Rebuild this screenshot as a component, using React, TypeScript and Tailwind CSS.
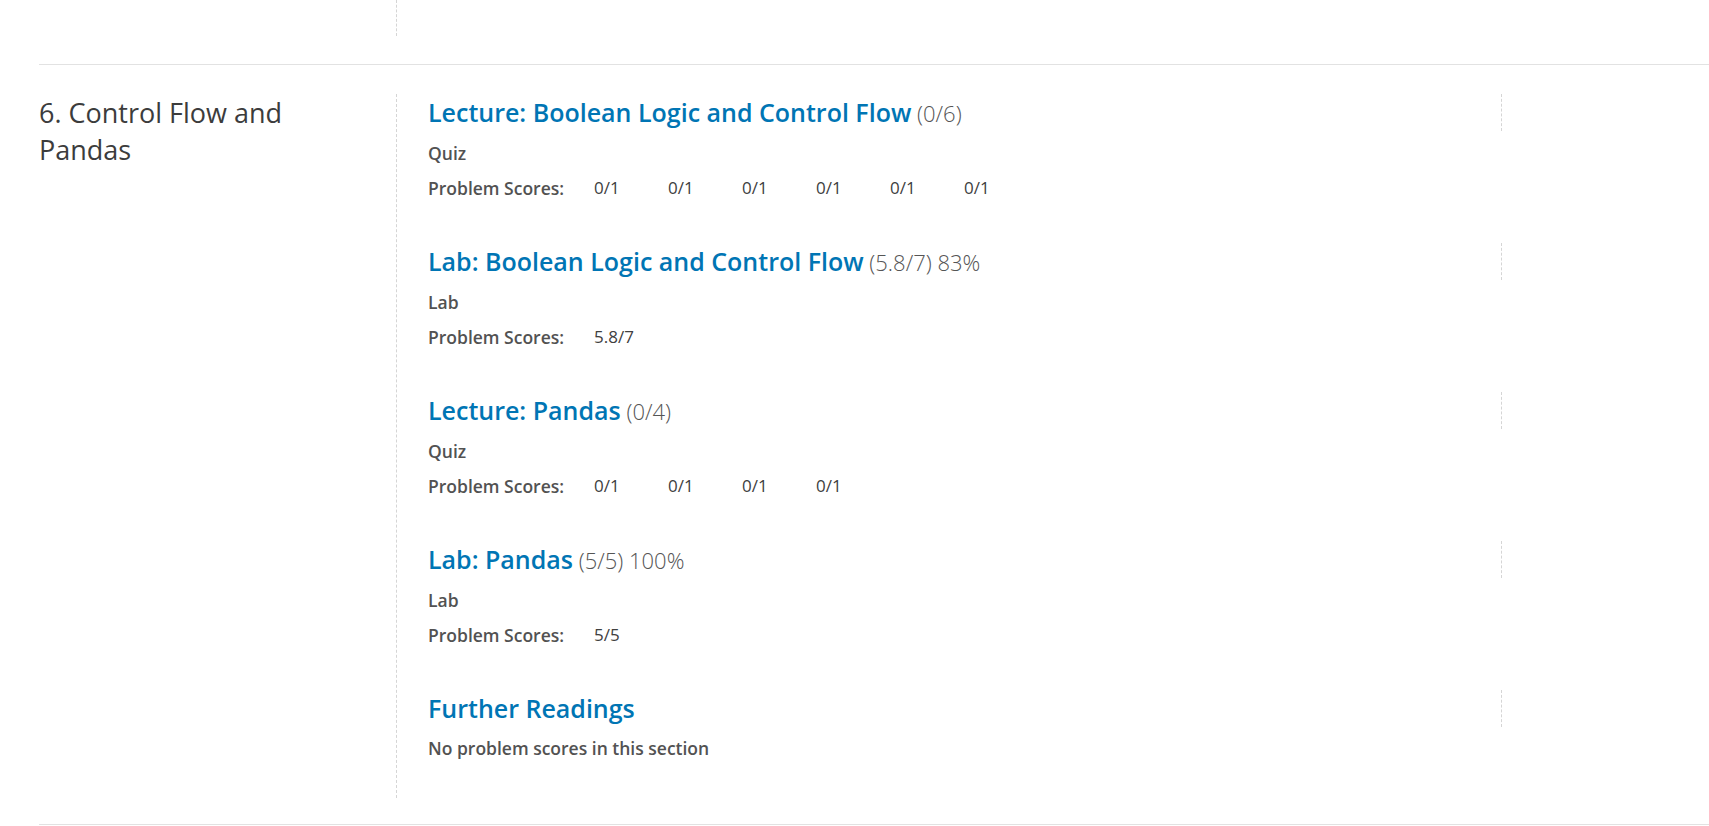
import React from "react";

type Item = {
  title: string;
  score?: string;
  kind?: string;
  scores?: string[];
};

const items: Item[] = [
  {
    title: "Lecture: Boolean Logic and Control Flow",
    score: "(0/6)",
    kind: "Quiz",
    scores: ["0/1", "0/1", "0/1", "0/1", "0/1", "0/1"],
  },
  {
    title: "Lab: Boolean Logic and Control Flow",
    score: "(5.8/7) 83%",
    kind: "Lab",
    scores: ["5.8/7"],
  },
  {
    title: "Lecture: Pandas",
    score: "(0/4)",
    kind: "Quiz",
    scores: ["0/1", "0/1", "0/1", "0/1"],
  },
  {
    title: "Lab: Pandas",
    score: "(5/5) 100%",
    kind: "Lab",
    scores: ["5/5"],
  },
  { title: "Further Readings" },
];

function Subsection({ item, last }: { item: Item; last: boolean }) {
  return (
    <div className={last ? "" : "mb-[44px]"}>
      {/* heading row with dashed right edge */}
      <div className="w-[1074px] h-[37px] border-r border-dashed border-[#d5d5d5] flex items-center">
        <h3 className="text-[25px] leading-[35px] font-semibold text-[#0075b4] whitespace-nowrap">
          {item.title}
          {item.score && (
            <span className="font-light text-[#555555] text-[22px]"> {item.score}</span>
          )}
        </h3>
      </div>

      {item.scores ? (
        <>
          <p className="mt-[11px] text-[17.5px] leading-[22px] font-semibold text-[#525252]">{item.kind}</p>
          <div className="mt-[13px] flex text-[17px] leading-[22px] text-[#525252]">
            <span className="w-[166px] text-[17.5px] font-semibold">Problem Scores:</span>
            {item.scores.map((s, i) => (
              <span key={i} className="w-[74px] text-[#404040]">
                {s}
              </span>
            ))}
          </div>
        </>
      ) : (
        <p className="mt-[10px] text-[17.5px] leading-[22px] font-semibold text-[#525252]">
          No problem scores in this section
        </p>
      )}
    </div>
  );
}

export default function App() {
  return (
    <div className="min-h-screen bg-white pl-[39px] font-['Open_Sans',_'Noto_Sans',sans-serif] overflow-hidden">
      {/* tail of previous chapter */}
      <div className="flex pb-[28px] border-b border-[#e2e2e2]">
        <div className="w-[357px] shrink-0" />
        <div className="h-[36px] border-l border-dashed border-[#d5d5d5]" />
      </div>

      {/* chapter 6 */}
      <div className="flex pt-[29px] pb-[26px] border-b border-[#e2e2e2]">
        <div className="w-[357px] shrink-0 pr-[40px]">
          <h2 className="text-[27px] leading-[37px] text-[#3c3c3c]">6. Control Flow and Pandas</h2>
        </div>
        <div className="border-l border-dashed border-[#d5d5d5] pl-[31px] pb-[39px]">
          {items.map((it, i) => (
            <Subsection key={i} item={it} last={i === items.length - 1} />
          ))}
        </div>
      </div>
    </div>
  );
}
